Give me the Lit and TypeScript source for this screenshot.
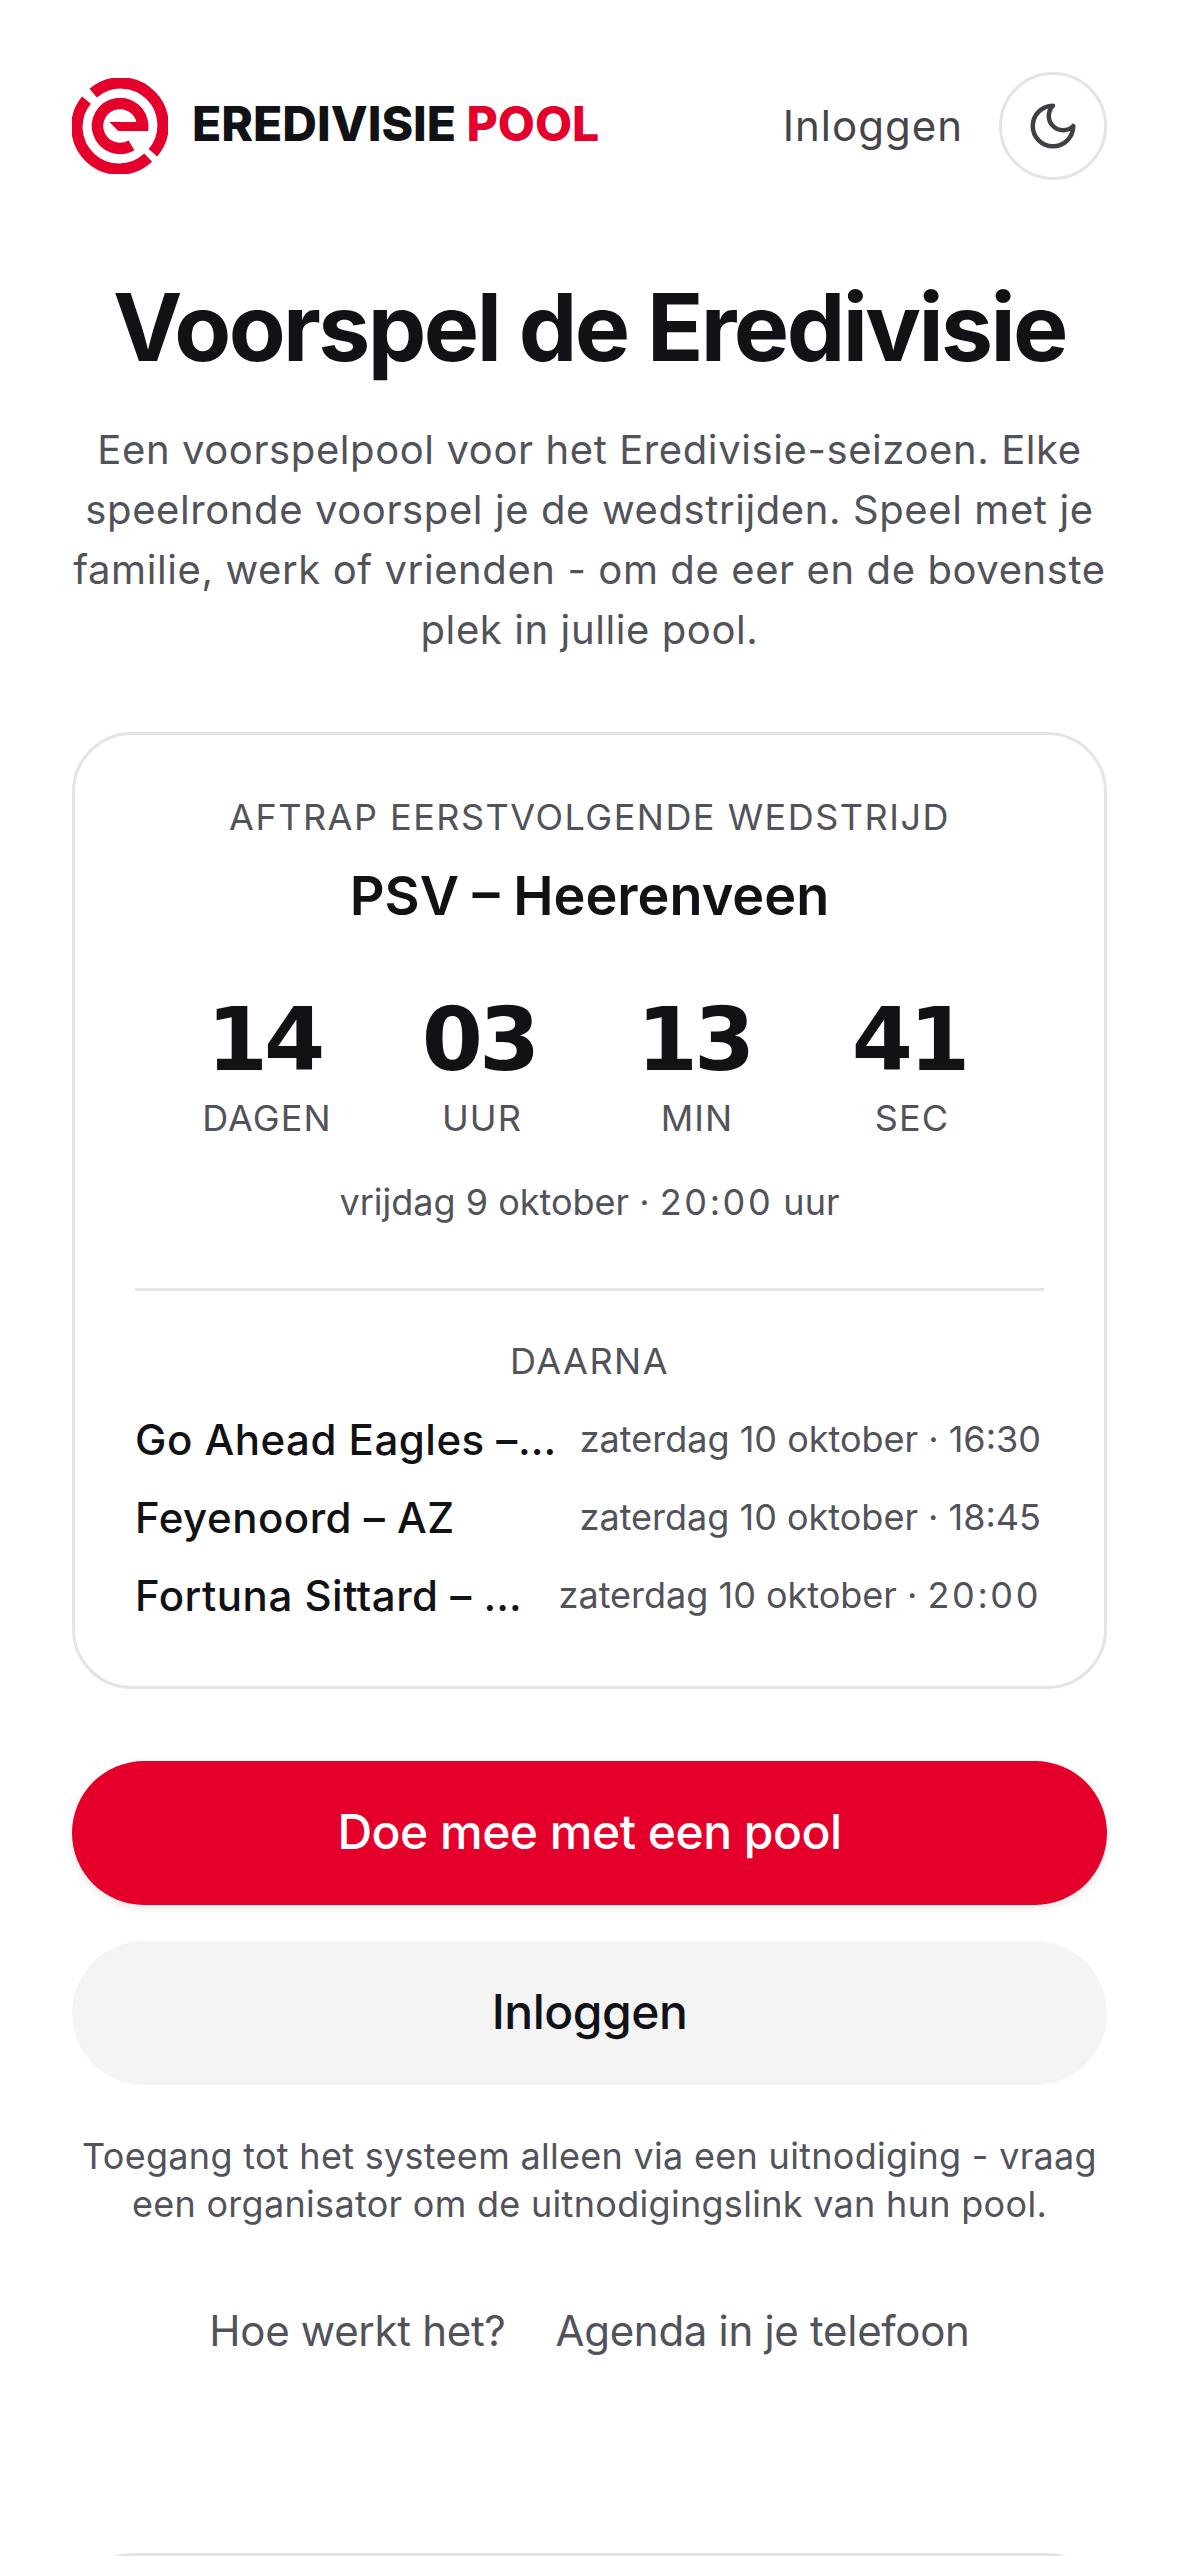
import { LitElement, html, css, svg } from "lit";
import { customElement } from "lit/decorators.js";

const upcoming = [
  { name: "Go Ahead Eagles – PEC Zwolle", day: "zaterdag 10 oktober · ", time: "16:30", wide: false },
  { name: "Feyenoord – AZ", day: "zaterdag 10 oktober · ", time: "18:45", wide: false },
  { name: "Fortuna Sittard – Ajax", day: "zaterdag 10 oktober · ", time: "20:00", wide: true },
];
const count = [
  { v: "14", l: "DAGEN" },
  { v: "03", l: "UUR" },
  { v: "13", l: "MIN" },
  { v: "41", l: "SEC" },
];

@customElement("app-root")
export class AppRoot extends LitElement {
  static styles = css`
    :host {
      display: block;
      width: 1179px;
      height: 2556px;
      overflow: hidden;
      background: #fff;
      color: #111216;
      font-family: Inter, "Liberation Sans", sans-serif;
    }
    .page { display: flex; flex-direction: column; padding: 0 72px; }
    .top { display: flex; align-items: center; height: 108px; margin-top: 72px; gap: 36px; }
    .brand { display: flex; align-items: center; gap: 24px; flex: 1; }
    .logo { width: 96px; height: 96px; flex: none; }
    .word { font-size: 48px; font-weight: 800; letter-spacing: 0; white-space: nowrap; padding-bottom: 6px; }
    .word b { color: #e4002b; font-weight: 800; }
    .login { font-size: 42px; font-weight: 400; color: #45454a; letter-spacing: 1px; padding-bottom: 2px; }
    .theme {
      width: 108px; height: 108px; box-sizing: border-box; border: 3px solid #e4e4e7;
      border-radius: 50%; display: flex; align-items: center; justify-content: center; flex: none;
    }
    .theme svg { width: 54px; height: 54px; }
    h1 {
      margin: 89px 0 0; text-align: center; font-size: 93px; line-height: 116px;
      font-weight: 700; letter-spacing: -2.6px;
    }
    .intro {
      margin: 35px 0 0; text-align: center; font-size: 40px; line-height: 60px;
      color: #52525b; letter-spacing: 0.6px;
    }
    .card {
      margin-top: 72px; border: 3px solid #e4e4e7; border-radius: 60px; box-sizing: border-box;
      padding: 58px 60px 48px; height: 957px; display: flex; flex-direction: column;
    }
    .eyebrow {
      text-align: center; font-size: 36px; line-height: 48px; color: #52525b; letter-spacing: 1.5px;
    }
    .match { text-align: center; font-size: 54px; line-height: 72px; font-weight: 600; margin-top: 19px; }
    .count { display: grid; grid-template-columns: repeat(4, 215px); justify-content: center; margin-top: 60px; }
    .cell { display: flex; flex-direction: column; align-items: center; }
    .num {
      font-family: "DejaVu Sans", sans-serif; font-weight: 700; font-size: 88px; line-height: 96px;
      letter-spacing: -4px; padding-right: 6px;
    }
    .unit { font-size: 36px; line-height: 48px; color: #52525b; letter-spacing: 1.1px; margin-top: 6px; }
    .when { text-align: center; font-size: 36px; line-height: 48px; color: #52525b; margin-top: 36px; }
    .time { letter-spacing: 2.6px; }
    .rule { height: 3px; background: #e4e4e7; margin-top: 62px; flex: none; }
    .then { margin-top: 46px; }
    .rows { display: flex; flex-direction: column; margin-top: 15px; }
    .row { display: flex; align-items: center; height: 78px; gap: 20px; }
    .name {
      flex: 1; min-width: 0; font-size: 42px; font-weight: 500; letter-spacing: 0.5px;
      white-space: nowrap; overflow: hidden; text-overflow: ellipsis;
    }
    .date { flex: none; font-size: 36px; color: #52525b; white-space: nowrap; padding-right: 3px; }
    .btn {
      height: 144px; box-sizing: border-box; padding-bottom: 3px; border-radius: 72px; display: flex;
      align-items: center; justify-content: center; font-size: 48px; font-weight: 500; letter-spacing: -0.5px;
    }
    .red { margin-top: 72px; background: #e4002b; color: #fff; box-shadow: 0 3px 9px rgba(0, 0, 0, 0.1); }
    .grey { margin-top: 36px; background: #f4f4f4; color: #111216; }
    .note {
      margin: 47px 0 0; text-align: center; font-size: 36px; line-height: 48px; color: #52525b; letter-spacing: 0.3px;
    }
    .links { display: flex; justify-content: center; gap: 50px; margin-top: 73px; font-size: 42px; line-height: 60px; color: #52525b; letter-spacing: -0.3px; }
    .next { margin-top: 192px; height: 200px; flex: none; border: 3px solid #e4e4e7; border-radius: 60px; }
  `;

  private logo() {
    return svg`
      <g fill="none" stroke="#e4002b" stroke-width="11.4">
        <path d="M21.23 15.12A42.3 42.3 0 0 1 80.94 74.7" />
        <path d="M76.14 79.71A42.3 42.3 0 0 1 14.43 22.1" />
        <path d="M70.5 48A22.5 22.5 0 1 0 59.5 67.3" />
      </g>
      <path fill="#e4002b" d="M37.3 44H76.3V53H46.3Z" />
    `;
  }

  render() {
    return html`
      <div class="page">
        <header class="top">
          <div class="brand">
            <svg class="logo" viewBox="0 0 96 96" role="img" aria-label="Eredivisie">${this.logo()}</svg>
            <div class="word">EREDIVISIE <b>POOL</b></div>
          </div>
          <div class="login">Inloggen</div>
          <div class="theme">
            <svg viewBox="0 0 24 24" fill="none" stroke="#3f3f46" stroke-width="2" stroke-linecap="round" stroke-linejoin="round">
              <path d="M12 3a6 6 0 0 0 9 9 9 9 0 1 1-9-9Z" />
            </svg>
          </div>
        </header>
        <h1>Voorspel de Eredivisie</h1>
        <p class="intro">
          Een voorspelpool voor het Eredivisie-seizoen. Elke<br />
          speelronde voorspel je de wedstrijden. Speel met je<br />
          familie, werk of vrienden - om de eer en de bovenste<br />
          plek in jullie pool.
        </p>
        <section class="card">
          <div class="eyebrow">AFTRAP EERSTVOLGENDE WEDSTRIJD</div>
          <div class="match">PSV – Heerenveen</div>
          <div class="count">
            ${count.map(
              (c) => html`<div class="cell"><div class="num">${c.v}</div><div class="unit">${c.l}</div></div>`
            )}
          </div>
          <div class="when">vrijdag 9 oktober · <span class="time">20:00</span> uur</div>
          <div class="rule"></div>
          <div class="eyebrow then">DAARNA</div>
          <div class="rows">
            ${upcoming.map(
              (u) => html`<div class="row">
                <div class="name">${u.name}</div>
                <div class="date">${u.day}<span class=${u.wide ? "time" : ""}>${u.time}</span></div>
              </div>`
            )}
          </div>
        </section>
        <div class="btn red">Doe mee met een pool</div>
        <div class="btn grey">Inloggen</div>
        <p class="note">
          Toegang tot het systeem alleen via een uitnodiging - vraag<br />
          een organisator om de uitnodigingslink van hun pool.
        </p>
        <nav class="links"><span>Hoe werkt het?</span><span>Agenda in je telefoon</span></nav>
        <div class="next"></div>
      </div>
    `;
  }
}
